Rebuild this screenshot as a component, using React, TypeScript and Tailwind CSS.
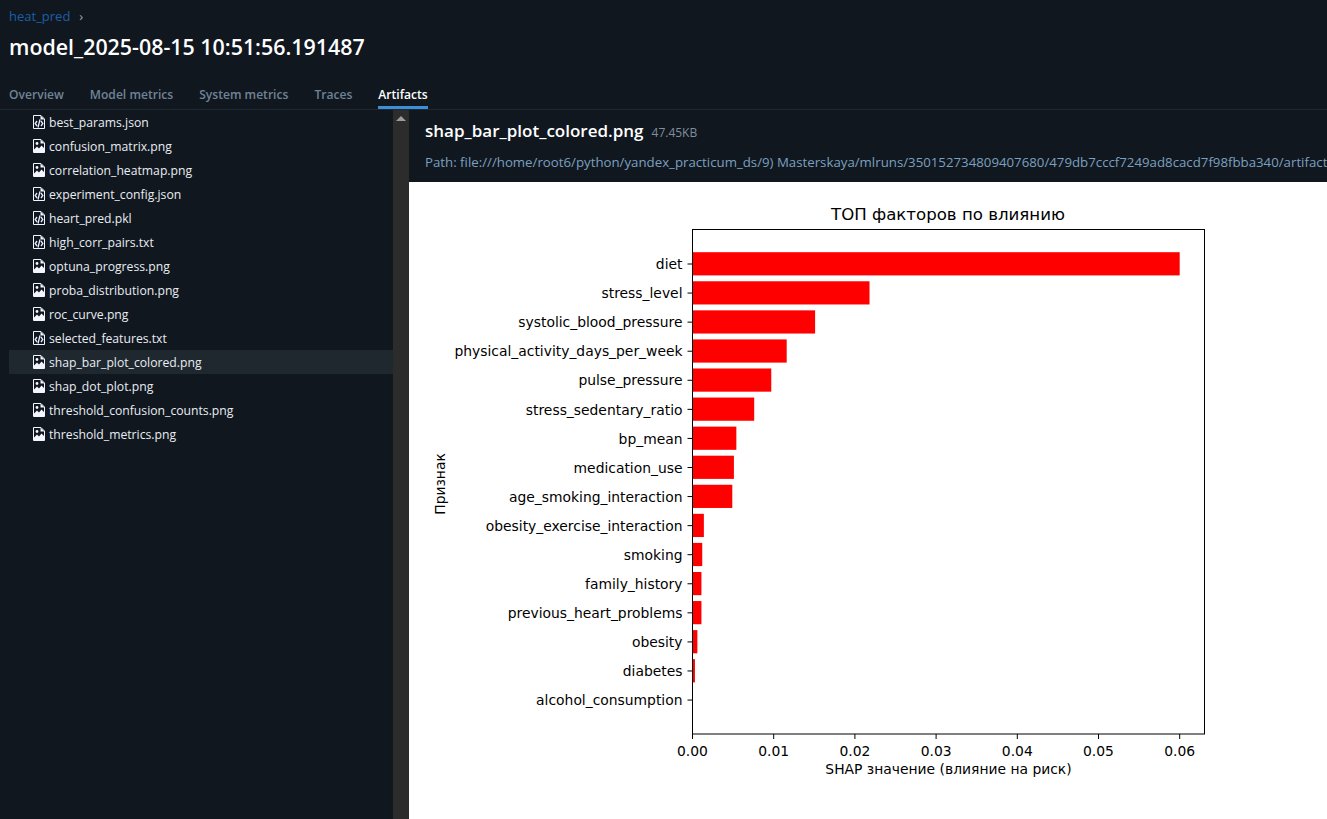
import React from 'react';

const files = [
  { name: 'best_params.json', kind: 'code' },
  { name: 'confusion_matrix.png', kind: 'image' },
  { name: 'correlation_heatmap.png', kind: 'image' },
  { name: 'experiment_config.json', kind: 'code' },
  { name: 'heart_pred.pkl', kind: 'code' },
  { name: 'high_corr_pairs.txt', kind: 'code' },
  { name: 'optuna_progress.png', kind: 'image' },
  { name: 'proba_distribution.png', kind: 'image' },
  { name: 'roc_curve.png', kind: 'image' },
  { name: 'selected_features.txt', kind: 'code' },
  { name: 'shap_bar_plot_colored.png', kind: 'image', active: true },
  { name: 'shap_dot_plot.png', kind: 'image' },
  { name: 'threshold_confusion_counts.png', kind: 'image' },
  { name: 'threshold_metrics.png', kind: 'image' },
];

const tabs = ['Overview', 'Model metrics', 'System metrics', 'Traces', 'Artifacts'];

const bars = [
  { label: 'diet', value: 0.06 },
  { label: 'stress_level', value: 0.0218 },
  { label: 'systolic_blood_pressure', value: 0.0151 },
  { label: 'physical_activity_days_per_week', value: 0.0116 },
  { label: 'pulse_pressure', value: 0.0097 },
  { label: 'stress_sedentary_ratio', value: 0.0076 },
  { label: 'bp_mean', value: 0.0054 },
  { label: 'medication_use', value: 0.0051 },
  { label: 'age_smoking_interaction', value: 0.0049 },
  { label: 'obesity_exercise_interaction', value: 0.0014 },
  { label: 'smoking', value: 0.0012 },
  { label: 'family_history', value: 0.0011 },
  { label: 'previous_heart_problems', value: 0.0011 },
  { label: 'obesity', value: 0.0006 },
  { label: 'diabetes', value: 0.0003 },
  { label: 'alcohol_consumption', value: 0 },
];

const FileIcon: React.FC<{ kind: string }> = ({ kind }) => (
  <svg width="12" height="14" viewBox="0 0 12 14" className="shrink-0">
    <path d="M.5 .5H8L11.5 4V13.5H.5z" fill="#11171f" stroke="#f2f4ff" strokeWidth="1" />
    <path d="M7.5 .5V4.5H11.5z" fill="#f2f4ff" />
    {kind === 'image' ? (
      <>
        <circle cx="4" cy="4.5" r="1.4" fill="#f2f4ff" />
        <path d="M1 13V10.5L4 7.5l2 2 2.5-3L11 9v4z" fill="#f2f4ff" />
      </>
    ) : (
      <path d="M4 6L2.2 8.5 4 11M8 6l1.8 2.5L8 11M7 4.5L5 12.5" fill="none" stroke="#e6ebff" strokeWidth="1.3" />
    )}
  </svg>
);

const ShapChart: React.FC = () => {
  const x0 = 283.5;
  const scale = 8120;
  const font = { fontFamily: '"DejaVu Sans", sans-serif' };
  return (
    <svg width="918" height="637" viewBox="0 0 918 637" className="block" style={font}>
      <text x="539" y="38" textAnchor="middle" fontSize="16.6" fill="#000">ТОП факторов по влиянию</text>
      {bars.map((b, i) => {
        const cy = 82 + i * 29.07;
        return (
          <g key={b.label}>
            <rect x={x0} y={cy - 11.8} width={b.value * scale} height={23.2} fill="#ff0000" />
            <line x1={x0 - 5} x2={x0} y1={cy} y2={cy} stroke="#000" strokeWidth="1" />
            <text x={x0 - 10} y={cy + 5.2} textAnchor="end" fontSize="13.88" fill="#000">{b.label}</text>
          </g>
        );
      })}
      <rect x={x0} y="47.5" width="512" height="504.5" fill="none" stroke="#000" strokeWidth="1" />
      {[0, 1, 2, 3, 4, 5, 6].map((t) => {
        const x = x0 + t * 81.2;
        return (
          <g key={t}>
            <line x1={x} x2={x} y1="552" y2="557" stroke="#000" strokeWidth="1" />
            <text x={x} y="574" textAnchor="middle" fontSize="13.88" fill="#000">{`0.0${t}`}</text>
          </g>
        );
      })}
      <text x="539.5" y="592" textAnchor="middle" fontSize="13.88" fill="#000">SHAP значение (влияние на риск)</text>
      <text transform="translate(36 302) rotate(-90)" textAnchor="middle" fontSize="13.88" fill="#000">Признак</text>
    </svg>
  );
};

export default function App() {
  return (
    <div className="h-[819px] w-[1327px] overflow-hidden flex flex-col bg-[#11171f] font-['Open_Sans','Noto_Sans',sans-serif] text-[12.2px]">
      {/* Header */}
      <div className="h-[110px] shrink-0 flex flex-col pl-[9px] border-b border-[#1f2730]">
        <div className="h-[33px] flex items-center pt-[1px] text-[#1a5fa8]">
          <span className="text-[13px]">heat_pred</span>
          <span className="ml-[9px] text-[13px] text-[#9aa5b1]">›</span>
        </div>
        <h1 className="h-[28px] leading-[28px] mt-[1px] text-[21.4px] font-semibold text-white">model_2025-08-15 10:51:56.191487</h1>
        <div className="flex gap-[26px] mt-[18px] flex-1 text-[12.1px]">
          {tabs.map((tab) => (
            <div
              key={tab}
              className={tab === 'Artifacts'
                ? 'font-semibold text-white border-b-[3px] border-[#3c8fd6] h-[30px] pt-[1px] leading-[30px]'
                : 'font-semibold text-[#6f8396] h-[30px] pt-[1px] leading-[30px]'}
            >
              {tab}
            </div>
          ))}
        </div>
      </div>

      <div className="flex flex-1 min-h-0">
        {/* File tree */}
        <div className="w-[393px] shrink-0 pl-[9px]">
          {files.map((f) => (
            <div
              key={f.name}
              className={f.active
                ? 'h-6 flex items-center pl-6 gap-1 bg-[#1f272f] text-[#e8edf2]'
                : 'h-6 flex items-center pl-6 gap-1 text-[#e8edf2]'}
            >
              <FileIcon kind={f.kind} />
              <span className="pt-[2px]">{f.name}</span>
            </div>
          ))}
        </div>

        {/* Scrollbar */}
        <div className="w-4 shrink-0 bg-[#2c2c2c] flex justify-center pt-[6px]">
          <div className="w-0 h-0 border-l-[5px] border-r-[5px] border-b-[5px] border-l-transparent border-r-transparent border-b-[#9c9c9c]" />
        </div>

        {/* Preview */}
        <div className="flex-1 min-w-0 flex flex-col">
          <div className="h-[72px] shrink-0 pl-4 overflow-hidden">
            <div className="flex items-baseline gap-2 pt-2 h-[40px]">
              <span className="text-[17px] font-semibold text-white">shap_bar_plot_colored.png</span>
              <span className="text-[12px] text-[#7f8e9d]">47.45KB</span>
            </div>
            <div className="whitespace-nowrap text-[13.25px] text-[#7ba0bf] mt-[3px]">
              Path: file:///home/root6/python/yandex_practicum_ds/9) Masterskaya/mlruns/350152734809407680/479db7cccf7249ad8cacd7f98fbba340/artifacts/shap_bar_plot_colored.png
            </div>
          </div>
          <div className="flex-1 bg-white overflow-hidden">
            <ShapChart />
          </div>
        </div>
      </div>
    </div>
  );
}
